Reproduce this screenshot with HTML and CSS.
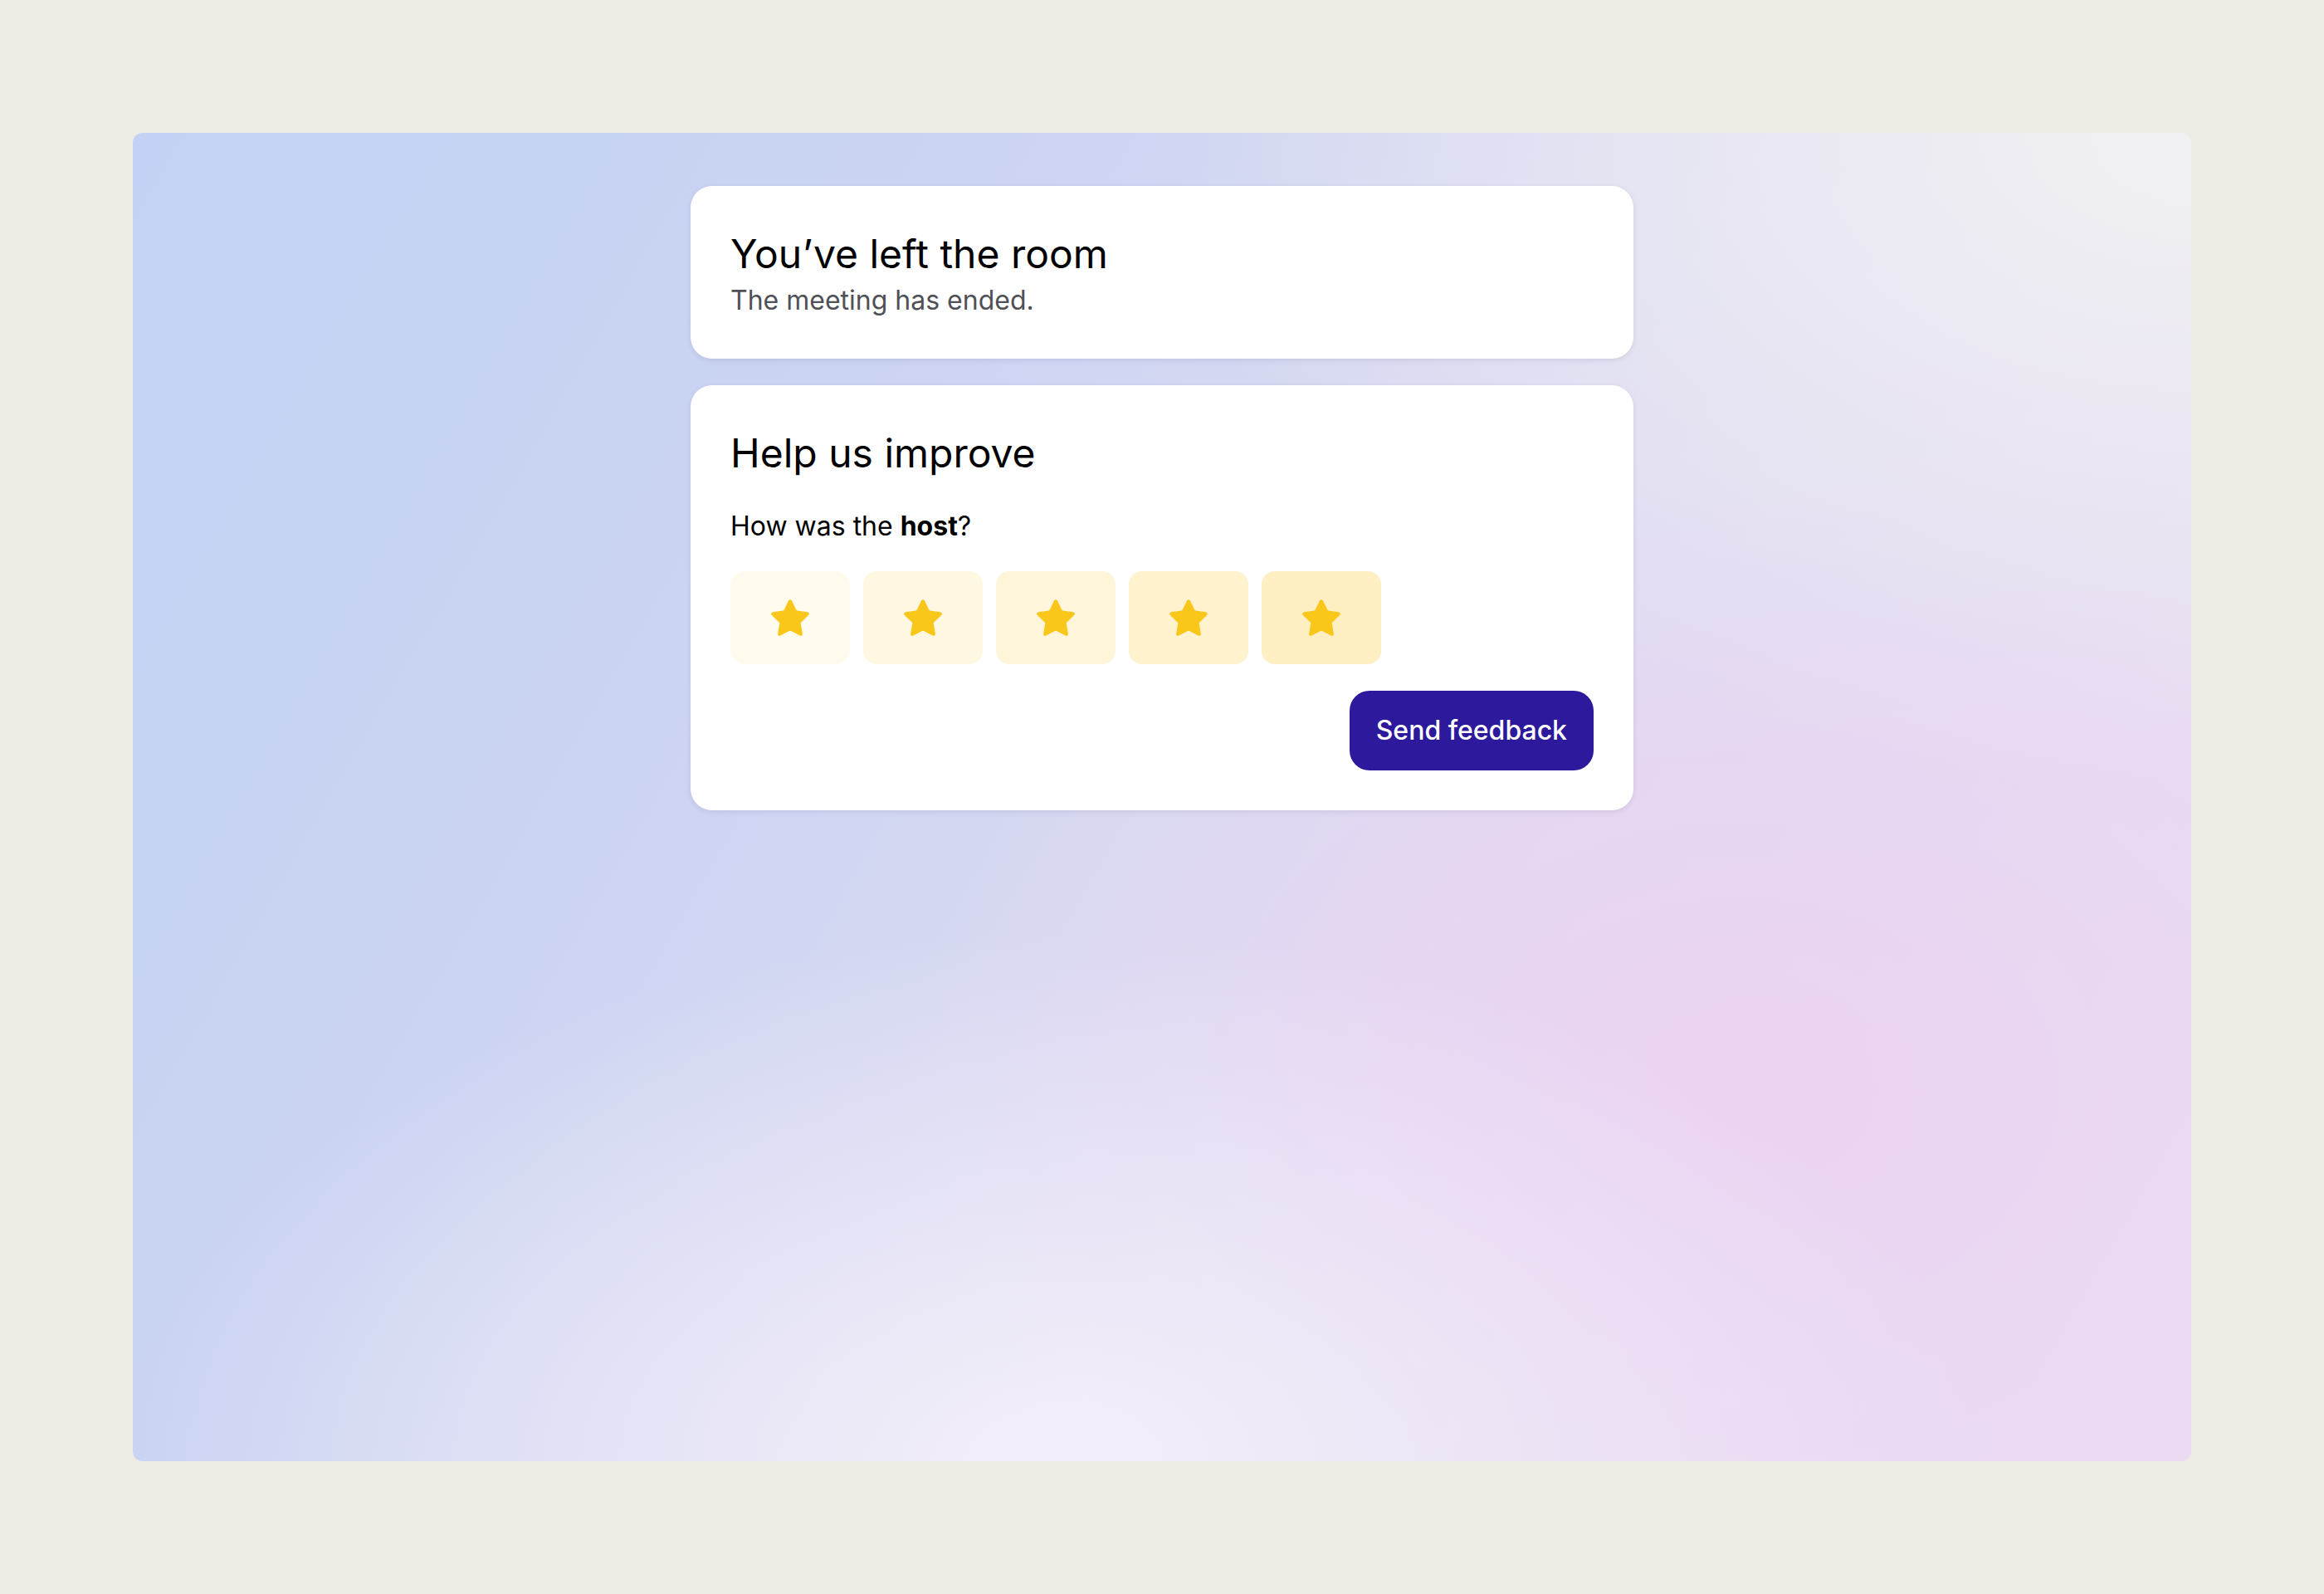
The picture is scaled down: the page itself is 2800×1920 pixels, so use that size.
FILE: index.html
```html
<!DOCTYPE html>
<html lang="en">
<head>
	<meta charset="UTF-8">
	<title>Left the room</title>
	<link rel="stylesheet" href="styles.css">
</head>
<body>
	<div class="stage">
		<div class="card leftCard">
			<h1 class="cardTitle">You’ve left the room</h1>
			<p class="cardSub">The meeting has ended.</p>
		</div>
		<div class="card feedCard">
			<h2 class="cardTitle">Help us improve</h2>
			<p class="question">How was the <b>host</b>?</p>
			<ul class="stars">
				<li class="star s1"><svg viewBox="0 0 24 24"><path d="M12 3L14.94 8.96L21.51 9.91L16.76 14.55L17.88 21.09L12 18L6.12 21.09L7.24 14.55L2.49 9.91L9.06 8.96Z"/></svg></li>
				<li class="star s2"><svg viewBox="0 0 24 24"><path d="M12 3L14.94 8.96L21.51 9.91L16.76 14.55L17.88 21.09L12 18L6.12 21.09L7.24 14.55L2.49 9.91L9.06 8.96Z"/></svg></li>
				<li class="star s3"><svg viewBox="0 0 24 24"><path d="M12 3L14.94 8.96L21.51 9.91L16.76 14.55L17.88 21.09L12 18L6.12 21.09L7.24 14.55L2.49 9.91L9.06 8.96Z"/></svg></li>
				<li class="star s4"><svg viewBox="0 0 24 24"><path d="M12 3L14.94 8.96L21.51 9.91L16.76 14.55L17.88 21.09L12 18L6.12 21.09L7.24 14.55L2.49 9.91L9.06 8.96Z"/></svg></li>
				<li class="star s5"><svg viewBox="0 0 24 24"><path d="M12 3L14.94 8.96L21.51 9.91L16.76 14.55L17.88 21.09L12 18L6.12 21.09L7.24 14.55L2.49 9.91L9.06 8.96Z"/></svg></li>
			</ul>
			<div class="actions">
				<a href="javascript:;" class="sendBtn">Send feedback</a>
			</div>
		</div>
	</div>
</body>
</html>
```

FILE: styles.css
```css
html,body{
	margin:0;
	padding:0;
}
body{
	background:#eeebe4;
	font-family:Inter,"Noto Sans",sans-serif;
	color:#000;
	padding:160px;
}
ul,li{
	padding:0;
	margin:0;
	list-style:none;
}
.stage{
	height:1600px;
	box-sizing:border-box;
	border-radius:12px;
	padding-top:64px;
	display:flex;
	flex-direction:column;
	align-items:center;
	gap:32px;
	background:
		radial-gradient(ellipse 45% 40% at 45% 100%, rgba(244,240,250,0.95), rgba(244,240,250,0) 100%),
		radial-gradient(ellipse 40% 45% at 78% 72%, rgba(236,210,242,0.9), rgba(236,210,242,0) 100%),
		radial-gradient(ellipse 50% 50% at 100% 0%, rgba(241,241,243,1), rgba(241,241,243,0) 100%),
		linear-gradient(120deg, #c3d2f4 0%, #cbd4f2 30%, #dedbf2 60%, #ecdcf2 100%);
}
.card{
	width:1136px;
	box-sizing:border-box;
	background:#fff;
	border-radius:26px;
	padding:48px;
	box-shadow:0 2px 6px rgba(40,40,90,0.10);
}
.leftCard{
	padding:50px 48px 46px;
}
.cardTitle{
	margin:0;
	font-size:48px;
	line-height:64px;
	font-weight:400;
}
.feedCard .cardTitle,.question{
	padding-top:2px;
	margin-bottom:-2px;
}
.cardSub{
	margin:0;
	font-size:32px;
	line-height:48px;
	color:#505057;
}
.feedCard{
	display:flex;
	flex-direction:column;
	gap:32px;
}
.question{
	margin-top:0;
	font-size:32px;
	line-height:48px;
}
.question b{
	font-weight:700;
}
.stars{
	display:flex;
	gap:16px;
}
.star{
	width:144px;
	height:112px;
	border-radius:16px;
	display:flex;
	align-items:center;
	justify-content:center;
}
.star svg{
	width:52px;
	height:52px;
	fill:#f9c61a;
	stroke:#f9c61a;
	stroke-width:2;
	stroke-linejoin:round;
}
.s1{background:#fffcef;}
.s2{background:#fef8e3;}
.s3{background:#fef5da;}
.s4{background:#fef2cf;}
.s5{background:#feefc3;}
.actions{
	display:flex;
	justify-content:flex-end;
}
.sendBtn{
	display:block;
	text-decoration:none;
	background:#2c199c;
	color:#fff;
	font-size:32px;
	font-weight:500;
	line-height:96px;
	padding:0 32px;
	border-radius:24px;
}
```
